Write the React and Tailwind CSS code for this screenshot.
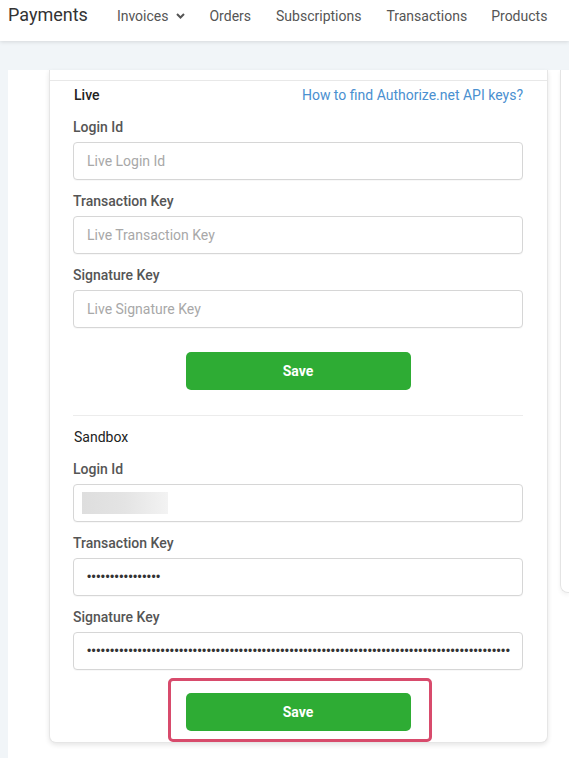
import React from "react";

const font = { fontFamily: "Roboto, 'Liberation Sans', sans-serif" };

function Label({ children }) {
  return <div className="text-[14px] leading-[20px] font-medium text-[#555555]">{children}</div>;
}

function Field({ label, placeholder, children }) {
  return (
    <div className="flex flex-col">
      <Label>{label}</Label>
      <div className="mt-[5px] h-[38px] border border-[#d6d6d6] rounded-[4px] flex items-center px-[13px] text-[14px] bg-white shadow-[0_1px_1px_rgba(0,0,0,0.03)]">
        {placeholder ? <span className="text-[#a8a8a8]">{placeholder}</span> : children}
      </div>
    </div>
  );
}

function Dots({ n }) {
  return (
    <span
      className="text-[#333] text-[12px] leading-none tracking-[0.4px]"
      style={{ fontFamily: "'Liberation Sans', sans-serif" }}
    >
      {"•".repeat(n)}
    </span>
  );
}

function SaveButton() {
  return (
    <div className="w-[225px] h-[38px] rounded-[5px] bg-[#2eac34] flex items-center justify-center text-white text-[14px] font-bold">
      Save
    </div>
  );
}

export default function App() {
  return (
    <div className="w-[569px] h-[758px] overflow-hidden bg-[#f1f5f8] flex flex-col" style={font}>
      <div className="h-[41px] bg-white shadow-[0_1px_4px_rgba(0,0,0,0.12)] flex items-start shrink-0 relative z-10">
        <div className="ml-[8px] mt-[6px] text-[18px] text-[#333] leading-none">Payments</div>
        <div className="ml-[29px] mt-[6px] flex items-center text-[14px] leading-[20px] text-[#555]">
          <span>Invoices</span>
          <svg className="ml-[8px]" width="9" height="6" viewBox="0 0 9 6">
            <path d="M1 1l3.5 3.5L8 1" fill="none" stroke="#555" strokeWidth="2" />
          </svg>
          <span className="ml-[24px]">Orders</span>
          <span className="ml-[25px]">Subscriptions</span>
          <span className="ml-[25px]">Transactions</span>
          <span className="ml-[24px]">Products</span>
        </div>
      </div>
      <div className="flex-1 pl-[8px] pt-[29px] flex">
        <div className="flex-1 bg-white flex items-start">
          <div className="ml-[41px] w-[499px] border-x border-b border-[#e6e6e6] rounded-b-[7px] shadow-[0_2px_5px_rgba(0,0,0,0.1)] bg-white">
            <div className="h-[10px]" />
            <div className="border-t border-[#e8e8e8] pl-[23px] pr-[24px] pt-[4px] pb-[11px]">
              <div className="flex items-center justify-between text-[14px] leading-[20px]">
                <span className="font-medium text-[#222] ml-[1px]">Live</span>
                <span className="text-[#4a90d0]">How to find Authorize.net API keys?</span>
              </div>
              <div className="mt-[12px] flex flex-col gap-[11px]">
                <Field label="Login Id" placeholder="Live Login Id" />
                <Field label="Transaction Key" placeholder="Live Transaction Key" />
                <Field label="Signature Key" placeholder="Live Signature Key" />
              </div>
              <div className="mt-[24px] flex justify-center">
                <SaveButton />
              </div>
              <div className="mt-[25px] border-t border-[#ececec]" />
              <div className="mt-[11px] ml-[1px] text-[14px] leading-[20px] text-[#222]">Sandbox</div>
              <div className="mt-[12px] flex flex-col gap-[11px]">
                <Field label="Login Id">
                  <div className="-ml-[5px] w-[86px] h-[22px] bg-gradient-to-r from-[#dedede] via-[#e4e4e4] to-[#f3f3f3]" />
                </Field>
                <Field label="Transaction Key">
                  <Dots n={16} />
                </Field>
                <Field label="Signature Key">
                  <Dots n={92} />
                </Field>
              </div>
              <div className="mt-[9px] flex justify-center">
                <div className="relative pt-[14px]">
                  <SaveButton />
                  <div className="absolute -left-[18px] -right-[21px] -top-[1px] -bottom-[11px] border-[3px] border-[#d84b6c] rounded-[5px]" />
                </div>
              </div>
            </div>
          </div>
          <div className="ml-[12px] flex-1 h-[523px] border-l border-b border-[#e4e4e4] rounded-bl-[8px] shadow-[0_2px_4px_rgba(0,0,0,0.06)]" />
        </div>
      </div>
    </div>
  );
}
